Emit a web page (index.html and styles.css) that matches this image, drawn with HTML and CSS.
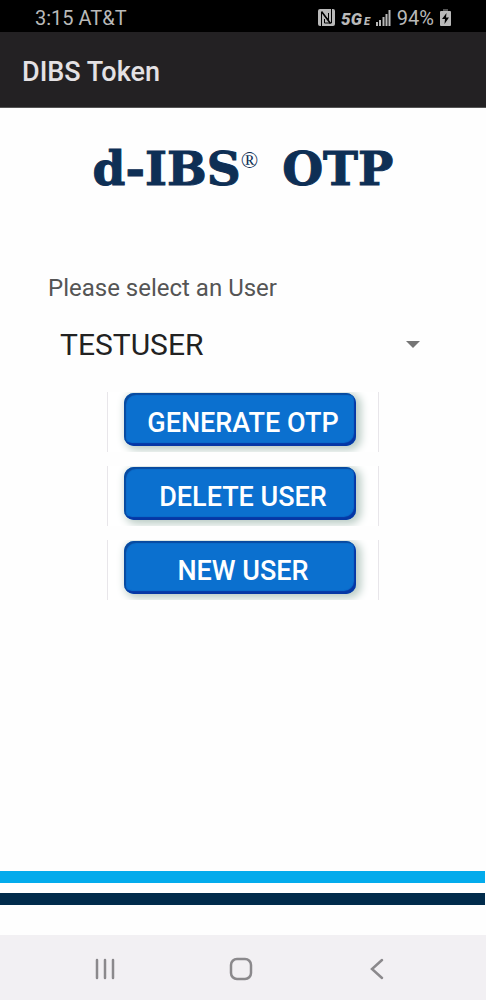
FILE: index.html
```html
<!DOCTYPE html>
<html lang="en">
  <head>
    <meta charset="UTF-8" />
    <meta name="viewport" content="width=device-width, initial-scale=1.0" />
    <title>DIBS Token</title>
    <link rel="stylesheet" href="styles.css">
  </head>
  <body>
    <!-- status bar -->
    <div class="status-bar">
      <span>3:15 AT&amp;T</span>
      <div class="status-icons">
        <svg class="nfc" width="17" height="17" viewBox="0 0 17 17">
          <rect width="17" height="17" rx="2" fill="#b9b9b9" />
          <path d="M3.500 17V3l7 8V4M6.500 10v4l7 0V0" fill="none" stroke="#000" stroke-width="1" />
          <path d="M3.500 2.500 12.500 14.500" fill="none" stroke="#000" stroke-width="1.500" />
        </svg>
        <span class="network">5G<small>E</small></span>
        <svg class="signal" width="15" height="16" viewBox="0 0 15 16">
          <path d="M1 16v-4M4 16v-6M7.500 16V7M10.500 16V4M13.500 16V0" stroke="#b9b9b9" stroke-width="2" />
        </svg>
        <span>94%</span>
        <svg class="battery" width="11" height="17" viewBox="0 0 11 17">
          <path d="M3 0h5v2H3z" fill="#555" />
          <rect y="2" width="11" height="15" rx="1" fill="#b9b9b9" />
          <path d="M6.500 4 2 10h3l-.500 5L9 8.500H6z" fill="#000" />
        </svg>
      </div>
    </div>

    <header class="app-bar">
      <h1>DIBS Token</h1>
    </header>

    <main class="content">
      <div class="logo">
        <span>d-IBS</span><span class="reg">®</span><span class="otp">OTP</span>
      </div>
      <!-- user -->
      <div class="user-box">
        <label for="user">Please select an User</label>
        <div class="select-box">
          <select name="user" id="user">
            <option value="testuser" selected>TESTUSER</option>
          </select>
          <svg class="arrow" width="14" height="7" viewBox="0 0 14 7">
            <path d="M0 0h14L7 7z" fill="#757575" />
          </svg>
        </div>
      </div>
      <!-- buttons -->
      <div class="buttons">
        <button type="button" class="btn"><span class="face">GENERATE OTP</span></button>
        <button type="button" class="btn"><span class="face">DELETE USER</span></button>
        <button type="button" class="btn"><span class="face">NEW USER</span></button>
      </div>
    </main>

    <div class="stripes">
      <div class="stripe light"></div>
      <div class="stripe dark"></div>
    </div>

    <!-- phone navigation -->
    <nav class="nav-bar">
      <button type="button" aria-label="Recent apps">
        <svg width="24" height="24" viewBox="0 0 24 24">
          <path d="M4 3v18M12 3v18M20 3v18" />
        </svg>
      </button>
      <button type="button" aria-label="Home">
        <svg width="24" height="24" viewBox="0 0 24 24">
          <rect x="2" y="2" width="20" height="20" rx="6" />
        </svg>
      </button>
      <button type="button" aria-label="Back">
        <svg width="24" height="24" viewBox="0 0 24 24">
          <path d="M17 3 7 12l10 9" />
        </svg>
      </button>
    </nav>
  </body>
</html>
```

FILE: styles.css
```css
* {
  padding: 0;
  margin: 0;
  box-sizing: border-box;
}
body {
  display: flex;
  flex-direction: column;
  min-height: 100vh;
  font-family: Roboto, sans-serif;
  background-color: #fefefe;
}
button {
  border: none;
  font-family: inherit;
}
.status-bar {
  display: flex;
  justify-content: space-between;
  align-items: center;
  height: 32px;
  padding: 3px 35px 0;
  background-color: #000;
  color: #b9b9b9;
  font-size: 20px;
}
.status-icons {
  display: flex;
  align-items: center;
  gap: 6px;
}
.network {
  font-size: 17px;
  font-weight: 900;
  font-style: italic;
  padding-top: 3px;
}
.network small {
  font-size: 11px;
  margin-left: 2px;
}
.app-bar {
  display: flex;
  align-items: center;
  height: 76px;
  padding: 4px 22px 0;
  background-color: #232123;
  color: #e4e1e4;
  border-bottom: 1px solid #555;
}
.app-bar h1 {
  font-size: 27px;
  font-weight: 500;
}
.content {
  flex: 1;
}
.logo {
  display: flex;
  justify-content: center;
  align-items: flex-start;
  padding-top: 41px;
  color: #0e2f55;
  font-family: "DejaVu Serif", serif;
  font-size: 47px;
  font-weight: bold;
  line-height: 40px;
  -webkit-text-stroke: 1px #0e2f55;
}
.logo .reg {
  font-family: "Liberation Serif", serif;
  font-size: 23px;
  font-weight: normal;
  line-height: 24px;
  -webkit-text-stroke: 0;
}
.logo .otp {
  margin-left: 24px;
}
.user-box {
  padding: 83px 48px 0;
}
.user-box label {
  display: block;
  color: #555;
  font-size: 24px;
  line-height: 32px;
}
.select-box {
  display: flex;
  align-items: center;
  margin-top: 19px;
  padding: 0 18px 0 12px;
}
.select-box select {
  flex: 1;
  height: 42px;
  appearance: none;
  border: none;
  background: none;
  color: #222;
  font-family: inherit;
  font-size: 30px;
}
.select-box select:focus {
  outline: none;
}
.arrow {
  margin-left: -14px;
  pointer-events: none;
}
.buttons {
  display: flex;
  flex-direction: column;
  align-items: center;
  gap: 14px;
  padding: 27px 0 40px;
}
.btn {
  width: 272px;
  height: 60px;
  padding: 1px 22px 6px 16px;
  overflow: hidden;
  background-color: #fff;
  border-left: 1px solid #e8e6ea;
  border-right: 1px solid #e8e6ea;
  cursor: pointer;
}
.face {
  display: flex;
  justify-content: center;
  align-items: center;
  height: 53px;
  padding: 6px 0 0 6px;
  border-radius: 10px;
  background-color: #0b70cf;
  color: #fff;
  font-size: 27px;
  font-weight: 500;
  box-shadow: inset 2px 2px 1px #084a9f, inset -2px -3px 1px #0637a5,
    3px 2px 8px 2px #b9cbc4;
}
.stripes {
  display: flex;
  flex-direction: column;
  gap: 10px;
  padding: 0 1px 30px 0;
}
.stripe {
  height: 12px;
}
.light {
  background-color: #03abec;
}
.dark {
  background-color: #002b4b;
}
.nav-bar {
  display: flex;
  justify-content: space-between;
  align-items: center;
  height: 65px;
  padding: 3px 97px 0 93px;
  background-color: #f2f0f3;
}
.nav-bar button {
  display: flex;
  background: none;
  cursor: pointer;
}
.nav-bar svg {
  fill: none;
  stroke: #8b898c;
  stroke-width: 2.5;
  stroke-linecap: round;
}
```
